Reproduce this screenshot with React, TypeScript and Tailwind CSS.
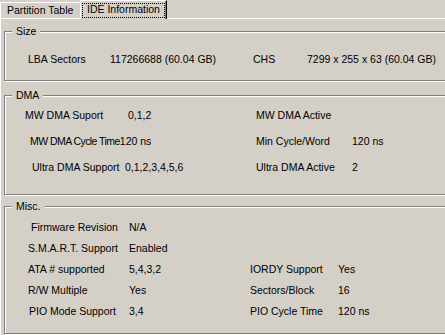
import React from "react";

function GroupBox({ title, className, children }: { title: string; className: string; children: React.ReactNode }) {
  return (
    <div
      className={`relative w-[470px] ml-[3px] border border-[#808080] shadow-[inset_1px_1px_0_#ffffff,1px_1px_0_#ffffff] ${className}`}
    >
      <span className="absolute left-[7px] top-[-7px] px-[4px] leading-[12px] bg-[#d4d0c8]">{title}</span>
      {children}
    </div>
  );
}

export default function App() {
  return (
    <div className="w-[445px] h-[335px] overflow-hidden bg-[#d4d0c8] text-black text-[10.5px] font-['Liberation_Sans',Arial,sans-serif] select-none">
      {/* tabs */}
      <div className="h-[18px] flex items-end">
        <div className="w-[80px] h-[16px] pl-[6px] border-l border-t border-white flex items-center leading-none whitespace-nowrap">
          Partition Table
        </div>
        <div className="relative z-10 -mb-px w-[87px] h-[19px] pl-[6px] border-l border-t border-r border-white border-r-black shadow-[inset_-1px_0_0_#808080] bg-[#d4d0c8] flex items-center leading-none whitespace-nowrap">
          <span className="-mt-[1px]">IDE Information</span>
          <span className="absolute left-px right-px top-[2px] bottom-[1px] border border-dotted border-black" />
        </div>
      </div>

      {/* panel */}
      <div className="h-[317px] border-t border-l border-white">
        <GroupBox title="Size" className="mt-[12px] h-[50px] pt-[18px]">
          <div className="h-[20px] flex items-center whitespace-nowrap">
            <span className="pl-[23px] w-[105px]">LBA Sectors</span>
            <span className="w-[143px]">117266688 (60.04 GB)</span>
            <span className="w-[54px]">CHS</span>
            <span>7299 x 255 x 63 (60.04 GB)</span>
          </div>
        </GroupBox>

        <GroupBox title="DMA" className="mt-[14px] h-[100px] pt-[7px]">
          <div className="h-[26px] flex items-center whitespace-nowrap">
            <div className="w-[251px] flex">
              <span className="pl-[20px] w-[123px]">MW DMA Suport</span>
              <span>0,1,2</span>
            </div>
            <span className="w-[96px]">MW DMA Active</span>
          </div>
          <div className="h-[26px] flex items-center whitespace-nowrap">
            <div className="w-[251px] flex">
              <span className="pl-[25px] tracking-[-0.55px]">MW DMA Cycle Time</span>
              <span>120 ns</span>
            </div>
            <span className="w-[96px]">Min Cycle/Word</span>
            <span>120 ns</span>
          </div>
          <div className="h-[26px] flex items-center whitespace-nowrap">
            <div className="w-[251px] flex">
              <span className="pl-[27px] w-[120px]">Ultra DMA Support</span>
              <span>0,1,2,3,4,5,6</span>
            </div>
            <span className="w-[96px]">Ultra DMA Active</span>
            <span>2</span>
          </div>
        </GroupBox>

        <GroupBox title="Misc." className="mt-[11px] h-[128px] pt-[10px]">
          <div className="h-[21px] flex items-center whitespace-nowrap">
            <span className="pl-[26px] w-[124px]">Firmware Revision</span>
            <span>N/A</span>
          </div>
          <div className="h-[21px] flex items-center whitespace-nowrap">
            <span className="pl-[23px] w-[124px]">S.M.A.R.T. Support</span>
            <span>Enabled</span>
          </div>
          <div className="h-[21px] flex items-center whitespace-nowrap">
            <div className="w-[245px] flex">
              <span className="pl-[23px] w-[124px]">ATA # supported</span>
              <span>5,4,3,2</span>
            </div>
            <span className="w-[88px]">IORDY Support</span>
            <span>Yes</span>
          </div>
          <div className="h-[21px] flex items-center whitespace-nowrap">
            <div className="w-[245px] flex">
              <span className="pl-[23px] w-[124px]">R/W Multiple</span>
              <span>Yes</span>
            </div>
            <span className="w-[88px]">Sectors/Block</span>
            <span>16</span>
          </div>
          <div className="h-[21px] flex items-center whitespace-nowrap">
            <div className="w-[245px] flex">
              <span className="pl-[24px] w-[124px]">PIO Mode Support</span>
              <span>3,4</span>
            </div>
            <span className="w-[88px]">PIO Cycle Time</span>
            <span>120 ns</span>
          </div>
        </GroupBox>
      </div>
    </div>
  );
}
